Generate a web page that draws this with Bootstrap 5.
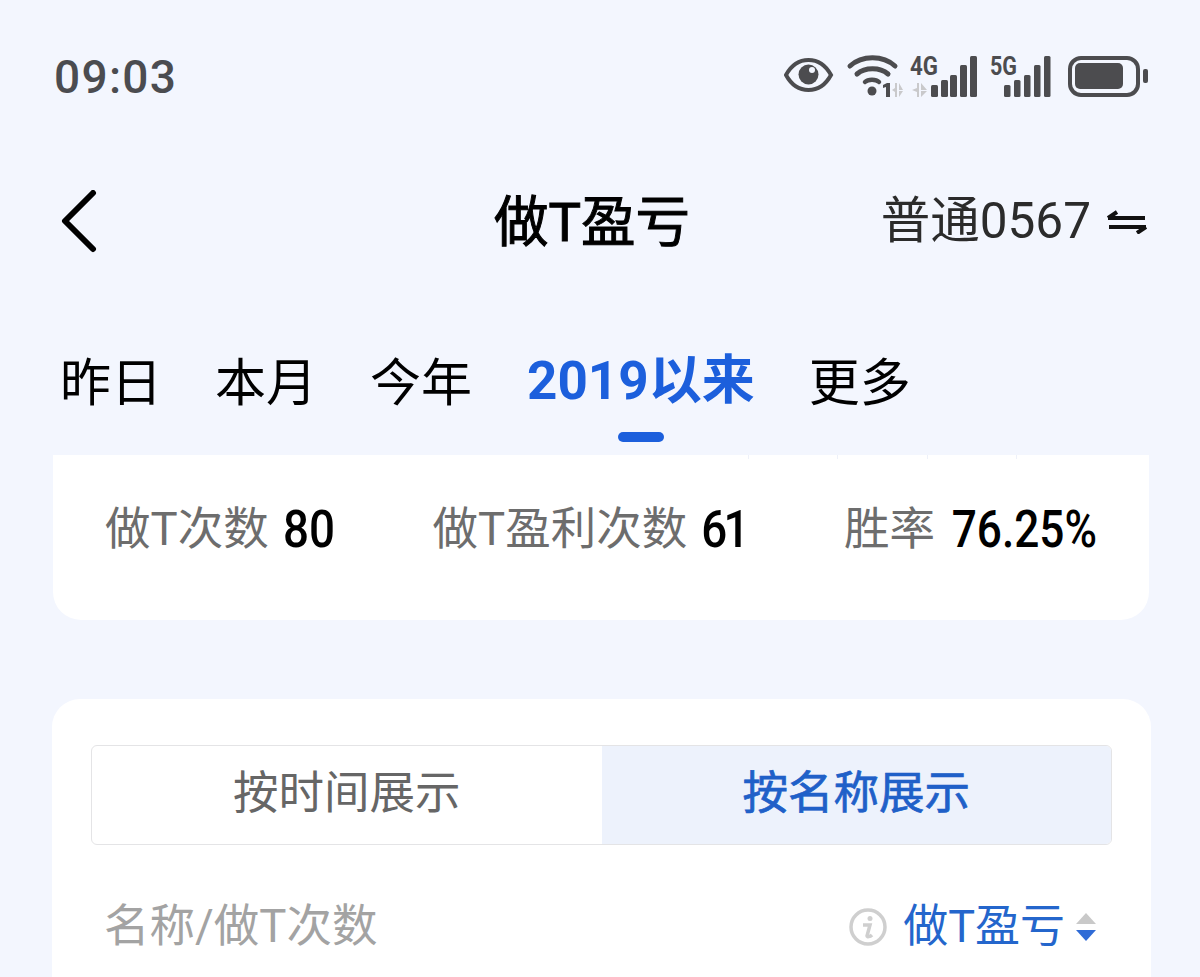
<!DOCTYPE html>
<html lang="zh-CN">
<head>
<meta charset="utf-8">
<title>做T盈亏</title>
<link href="https://cdn.jsdelivr.net/npm/bootstrap@5.3.0/dist/css/bootstrap.min.css" rel="stylesheet">
<style>
html,body{height:977px;overflow:hidden}
body{background:#f3f6fe;font-family:Roboto,"Noto Sans CJK SC",sans-serif;color:#000}
.status-row{height:140px;padding:50px 52px 0 54px}
.clock{font-size:46px;font-weight:500;line-height:46px;color:#4b4c50;letter-spacing:1.3px}
.top-nav{height:160px;padding:4px 53px 0 61px}
.top-title{font-size:54.5px;font-weight:400;line-height:1;position:absolute;left:494px;-webkit-text-stroke:1px #000}
.account{font-size:49.5px;line-height:1;color:#2b2b2b}
.tabs-row{height:155px;padding:0 0 0 60px;gap:53px}
.tab-item{font-size:51px;line-height:1;padding-top:58px;position:relative}
.tab-on{font-weight:700;color:#1c5fdc;font-size:53px;padding-top:55px;margin:0 1px 0 2px}
.tab-on::after{content:"";position:absolute;left:91px;top:132px;width:46px;height:10px;border-radius:5px;background:#1c5fdc}
.sum-card{position:relative;margin:0 51px 0 53px;height:165px;background:#fff;border-radius:0 0 28px 28px;padding:45px 52px 0}
.sum-card::before{content:"";position:absolute;left:695px;top:0;width:270px;height:4px;background:repeating-linear-gradient(90deg,#eef1f9 0 1px,transparent 1px 89.3px)}
.sum-item{font-size:45.5px;line-height:60px;color:#6d6d6d}
.sum-num{display:inline-block;font-weight:500;color:#000;font-size:52px;margin-left:7px;transform:scaleX(.88);transform-origin:right center;vertical-align:-2px}
.sum-num-tight{margin-left:8px;letter-spacing:-4px}
.sum-num-long{margin-left:-9px;transform:scaleX(.85)}
.main-card{margin:79px 49px 0 52px;background:#fff;border-radius:28px 28px 0 0;padding:46px 39px 0;height:300px}
.seg-box{height:100px;border:1px solid #e4e4e6;border-radius:6px;overflow:hidden}
.seg-one{flex:1;font-size:45.5px;color:#666;line-height:96px;text-align:center}
.seg-on{background:#edf2fc;color:#2060c8;-webkit-text-stroke:.7px #2060c8}
.head-row{padding:52px 15px 0 13px;align-items:center}
.head-left{font-size:45.5px;line-height:60px;color:#a3a3a3}
.head-right{font-size:45px;line-height:60px;color:#2466cc}
.sort-mark{margin-left:10px}
</style>
</head>
<body>
<div class="status-row d-flex justify-content-between align-items-start">
  <div class="clock mt-1">09:03</div>
  <svg width="364" height="48" viewBox="0 -4 364 48" xmlns="http://www.w3.org/2000/svg">
    <g fill="#4c4c4f">
      <path d="M2 21C8 10 15 6 24.500 6S41 10 47 21C41 32 34 36 24.500 36S8 32 2 21Z" fill="none" stroke="#4c4c4f" stroke-width="4"/>
      <circle cx="24.500" cy="20.500" r="10"/><circle cx="28" cy="16" r="3" fill="#f3f6fe"/>
      <path d="M66 12c12-11 33-11 45 0" fill="none" stroke="#4c4c4f" stroke-width="5" stroke-linecap="round"/>
      <path d="M73 20c8-7 23-7 31 0" fill="none" stroke="#4c4c4f" stroke-width="5" stroke-linecap="round"/>
      <path d="M81 28c3-3 11-3 14 0" fill="none" stroke="#4c4c4f" stroke-width="4.500" stroke-linecap="round"/>
      <circle cx="88" cy="37" r="4.500"/>
      <path d="M102 43V33l-3 1v-3l4-2h3v14Z"/>
    </g>
    <path d="M113 29v14h-2v-5l-3-2 3-2v-5ZM115 29l4 7h-4ZM115 37h4l-4 6Z" fill="#c9c9cb"/>
    <path d="M135 29v14h-2v-5l-5-2 5-2v-5ZM137 29l6 7h-6ZM137 37h6l-6 6Z" fill="#c9c9cb"/>
    <g fill="#4c4c4f">
      <text x="126" y="21" font-family="Roboto,sans-serif" font-weight="700" font-size="25" textLength="28" lengthAdjust="spacingAndGlyphs">4G</text>
      <rect x="147" y="31" width="7" height="12" rx="1.500"/><rect x="157" y="26" width="7" height="17" rx="1.500"/><rect x="166" y="21" width="7" height="22" rx="1.500"/><rect x="176" y="11" width="7" height="32" rx="1.500"/><rect x="186" y="2" width="7" height="41" rx="1.500"/>
      <text x="206" y="21" font-family="Roboto,sans-serif" font-weight="700" font-size="25" textLength="27" lengthAdjust="spacingAndGlyphs">5G</text>
      <rect x="220" y="31" width="6.500" height="12" rx="1.500"/><rect x="230" y="26" width="6.500" height="17" rx="1.500"/><rect x="240" y="21" width="6.500" height="22" rx="1.500"/><rect x="250" y="11" width="6.500" height="32" rx="1.500"/><rect x="260" y="2" width="6.500" height="41" rx="1.500"/>
      <rect x="286" y="4" width="68" height="37" rx="11" fill="none" stroke="#4c4c4f" stroke-width="4"/>
      <rect x="291" y="9" width="48" height="26" rx="5"/>
      <rect x="359" y="15" width="5" height="14" rx="2"/>
    </g>
  </svg>
</div>
<div class="top-nav d-flex justify-content-between align-items-center">
  <svg width="40" height="64" viewBox="0 0 40 64" xmlns="http://www.w3.org/2000/svg"><path d="M32 3 4 31l28 28" fill="none" stroke="#000" stroke-width="6" stroke-linecap="round" stroke-linejoin="round"/></svg>
  <div class="top-title">做T盈亏</div>
  <div class="account d-flex align-items-center gap-3">普通0567
    <svg width="40" height="24" viewBox="0 0 40 24" xmlns="http://www.w3.org/2000/svg"><path d="M1 8h37M1 8l9-6M39 17H2M39 17l-9 6" fill="none" stroke="#111" stroke-width="4"/></svg>
  </div>
</div>
<div class="tabs-row d-flex">
  <div class="tab-item">昨日</div>
  <div class="tab-item">本月</div>
  <div class="tab-item">今年</div>
  <div class="tab-item tab-on">2019以来</div>
  <div class="tab-item">更多</div>
</div>
<div class="sum-card d-flex justify-content-between">
  <div class="sum-item">做T次数<span class="sum-num">80</span></div>
  <div class="sum-item">做T盈利次数<span class="sum-num sum-num-tight">61</span></div>
  <div class="sum-item">胜率<span class="sum-num sum-num-long">76.25%</span></div>
</div>
<div class="main-card">
  <div class="seg-box d-flex">
    <div class="seg-one">按时间展示</div>
    <div class="seg-one seg-on">按名称展示</div>
  </div>
  <div class="head-row d-flex justify-content-between">
    <div class="head-left">名称/做T次数</div>
    <div class="head-right d-flex align-items-center">
      <svg class="me-3" width="38" height="38" viewBox="0 0 38 38" xmlns="http://www.w3.org/2000/svg"><circle cx="19" cy="19" r="17" fill="none" stroke="#cfcfcf" stroke-width="3.500"/><circle cx="21" cy="10.500" r="2.500" fill="#cfcfcf"/><path d="M14 17h7l-3 11c0 1 3 1 5-1" fill="none" stroke="#cfcfcf" stroke-width="3.500"/></svg>
      <span>做T盈亏</span>
      <svg class="sort-mark" width="22" height="30" viewBox="0 0 22 30" xmlns="http://www.w3.org/2000/svg"><path d="M11 1l10 11H1Z" fill="#c9c9c9"/><path d="M11 29l10-11H1Z" fill="#2f6bd6"/></svg>
    </div>
  </div>
</div>
</body>
</html>
